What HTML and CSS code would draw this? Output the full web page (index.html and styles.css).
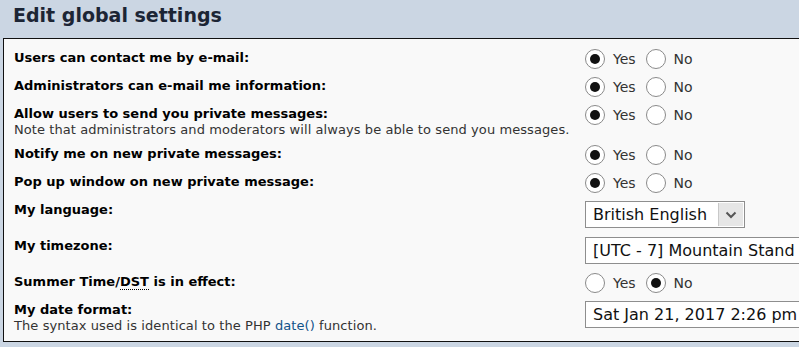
FILE: index.html
```html
<!DOCTYPE html>
<html>
<head>
<meta charset="utf-8">
<title>Edit global settings</title>
<link rel="stylesheet" href="styles.css">
</head>
<body>
<div class="page">
  <h2 class="title">Edit global settings</h2>
  <div class="panel">
    <div class="row">
      <div class="label"><b>Users can contact me by e-mail:</b></div>
      <div class="ctrl radios">
        <label class="opt"><span class="radio on"></span>Yes</label>
        <label class="opt"><span class="radio"></span>No</label>
      </div>
    </div>
    <div class="row">
      <div class="label"><b>Administrators can e-mail me information:</b></div>
      <div class="ctrl radios">
        <label class="opt"><span class="radio on"></span>Yes</label>
        <label class="opt"><span class="radio"></span>No</label>
      </div>
    </div>
    <div class="row">
      <div class="label"><b>Allow users to send you private messages:</b><span class="note">Note that administrators and moderators will always be able to send you messages.</span></div>
      <div class="ctrl radios">
        <label class="opt"><span class="radio on"></span>Yes</label>
        <label class="opt"><span class="radio"></span>No</label>
      </div>
    </div>
    <div class="row">
      <div class="label"><b>Notify me on new private messages:</b></div>
      <div class="ctrl radios">
        <label class="opt"><span class="radio on"></span>Yes</label>
        <label class="opt"><span class="radio"></span>No</label>
      </div>
    </div>
    <div class="row">
      <div class="label"><b>Pop up window on new private message:</b></div>
      <div class="ctrl radios">
        <label class="opt"><span class="radio on"></span>Yes</label>
        <label class="opt"><span class="radio"></span>No</label>
      </div>
    </div>
    <div class="row row-sel">
      <div class="label"><b>My language:</b></div>
      <div class="ctrl">
        <span class="select sel-lang">British English<span class="arrow"><svg width="12" height="8" viewBox="0 0 12 8"><path d="M1.5 1.5 L6 6 L10.5 1.5" fill="none" stroke="#555" stroke-width="2"/></svg></span></span>
      </div>
    </div>
    <div class="row row-sel">
      <div class="label"><b>My timezone:</b></div>
      <div class="ctrl">
        <span class="select sel-wide">[UTC - 7] Mountain Stand</span>
      </div>
    </div>
    <div class="row">
      <div class="label"><b>Summer Time/<abbr class="abbr">DST</abbr> is in effect:</b></div>
      <div class="ctrl radios">
        <label class="opt"><span class="radio"></span>Yes</label>
        <label class="opt"><span class="radio on"></span>No</label>
      </div>
    </div>
    <div class="row row-last">
      <div class="label"><b>My date format:</b><span class="note">The syntax used is identical to the PHP <a class="link" href="#">date()</a> function.</span></div>
      <div class="ctrl">
        <span class="select sel-wide">Sat Jan 21, 2017 2:26 pm</span>
      </div>
    </div>
  </div>
</div>
</body>
</html>
```
FILE: styles.css
```css
html, body {
  margin: 0;
  padding: 0;
}
body {
  background: #cbd6e3;
  font-family: "DejaVu Sans", Verdana, sans-serif;
  color: #000;
  overflow: hidden;
  width: 799px;
  height: 347px;
}
.page {
  width: 1000px;
}
.title {
  margin: 0;
  height: 38px;
  box-sizing: border-box;
  padding: 4px 0 0 13px;
  font-size: 19px;
  line-height: 22px;
  font-weight: bold;
  color: #1c2535;
}
.panel {
  margin-left: 3px;
  border: 1px solid #111;
  background: #f9f9f9;
  padding: 10px 0 4px 0;
  height: 304px;
  box-sizing: border-box;
}
.row {
  display: flex;
  align-items: flex-start;
  padding: 0 0 3px 0;
}
.row + .row {
  padding-top: 5px;
}
.row-sel {
  padding-bottom: 4px;
}
.label {
  width: 581px;
  padding-left: 10px;
  box-sizing: border-box;
  font-size: 13px;
  line-height: 18px;
}
.label b {
  display: block;
  font-weight: bold;
  color: #000;
}
.note {
  display: block;
  font-size: 13px;
  line-height: 14px;
  letter-spacing: 0.08px;
  color: #333;
}
.abbr {
  text-decoration: none;
  border-bottom: 1px dotted #000;
}
.link {
  color: #105289;
  text-decoration: none;
}
.ctrl {
  display: flex;
  align-items: center;
}
.radios {
  height: 20px;
  gap: 10px;
}
.opt {
  display: flex;
  align-items: center;
  gap: 8px;
  font-size: 14px;
  color: #333;
}
.radio {
  width: 20px;
  height: 20px;
  box-sizing: border-box;
  border: 1px solid #8a8a8a;
  border-radius: 50%;
  background: #fff;
  display: flex;
  align-items: center;
  justify-content: center;
}
.radio.on::after {
  content: "";
  width: 10px;
  height: 10px;
  border-radius: 50%;
  background: #111;
}
.select {
  position: relative;
  display: block;
  height: 27px;
  box-sizing: border-box;
  border: 1px solid #8e8e8e;
  background: #fff;
  font-size: 16px;
  line-height: 25px;
  padding-left: 7px;
  color: #111;
  white-space: nowrap;
}
.sel-lang {
  width: 160px;
}
.sel-wide {
  width: 214px;
  border-right: 0;
}
.arrow {
  position: absolute;
  right: 1px;
  top: 1px;
  width: 24px;
  height: 23px;
  background: #e6e6e6;
  border-left: 1px solid #c8c8c8;
  display: flex;
  align-items: center;
  justify-content: center;
}
```
